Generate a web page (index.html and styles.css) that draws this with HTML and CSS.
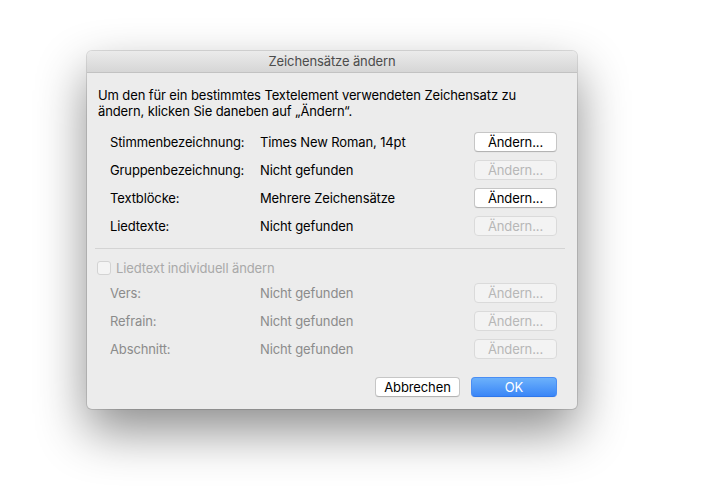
FILE: index.html
```html
<!DOCTYPE html>
<html lang="de">
  <head>
    <meta charset="UTF-8" />
    <title>Zeichensätze ändern</title>
    <link rel="stylesheet" href="styles.css">
  </head>
  <body>
    <div class="dialog">
      <div class="title-bar">Zeichensätze ändern</div>

      <div class="dialog-body">
        <p class="intro">
          Um den für ein bestimmtes Textelement verwendeten Zeichensatz zu<br />
          ändern, klicken Sie daneben auf „Ändern“.
        </p>

        <div class="font-rows">
          <div class="label">Stimmenbezeichnung:</div>
          <div class="value">Times New Roman, 14pt</div>
          <button class="btn">Ändern...</button>

          <div class="label">Gruppenbezeichnung:</div>
          <div class="value">Nicht gefunden</div>
          <button class="btn" disabled>Ändern...</button>

          <div class="label">Textblöcke:</div>
          <div class="value">Mehrere Zeichensätze</div>
          <button class="btn">Ändern...</button>

          <div class="label">Liedtexte:</div>
          <div class="value">Nicht gefunden</div>
          <button class="btn" disabled>Ändern...</button>
        </div>

        <div class="separator"></div>

        <label class="check disabled">
          <span class="check-box"></span>
          Liedtext individuell ändern
        </label>

        <div class="font-rows lyrics-rows disabled">
          <div class="label">Vers:</div>
          <div class="value">Nicht gefunden</div>
          <button class="btn" disabled>Ändern...</button>

          <div class="label">Refrain:</div>
          <div class="value">Nicht gefunden</div>
          <button class="btn" disabled>Ändern...</button>

          <div class="label">Abschnitt:</div>
          <div class="value">Nicht gefunden</div>
          <button class="btn" disabled>Ändern...</button>
        </div>

        <div class="footer">
          <button class="btn cancel-btn">Abbrechen</button>
          <button class="btn ok-btn">OK</button>
        </div>
      </div>
    </div>
  </body>
</html>
```

FILE: styles.css
```css
* {
  margin: 0;
  padding: 0;
  box-sizing: border-box;
}

html,
body {
  min-height: 100vh;
  background: #fff;
}

body {
  font-family: Inter, "Liberation Sans", Arial, sans-serif;
  font-size: 13px;
  letter-spacing: -0.12px;
  color: #000;
  padding: 51px 0 0 87px;
}

.dialog {
  width: 490px;
  background: #ececec;
  border-radius: 5px;
  overflow: hidden;
  box-shadow: 0 22px 50px rgba(0, 0, 0, 0.45), 0 0 0 1px rgba(0, 0, 0, 0.12);
}

.title-bar {
  height: 22px;
  line-height: 21px;
  text-align: center;
  color: #4c4c4c;
  background: linear-gradient(#ebebeb, #d6d6d6);
  border-bottom: 1px solid #c2c2c2;
}

.dialog-body {
  padding: 14px 12px 12px 11px;
}

.intro {
  line-height: 16px;
}

.font-rows {
  display: grid;
  grid-template-columns: 150px 1fr 83px;
  grid-auto-rows: 20px;
  row-gap: 8px;
  align-items: center;
  margin-top: 13px;
  padding: 0 8px 0 12px;
}

.btn {
  height: 20px;
  font-family: inherit;
  font-size: 13px;
  letter-spacing: inherit;
  color: #000;
  background: #fff;
  border: 1px solid #c6c6c6;
  border-bottom-color: #b3b3b3;
  border-radius: 4px;
  box-shadow: 0 0.5px 0 rgba(0, 0, 0, 0.05);
}

.btn:disabled {
  color: #b7b7b7;
  background: #f3f3f3;
  border-color: #dadada;
  box-shadow: none;
}

.separator {
  height: 1px;
  background: #d4d4d4;
  margin: 12px 0 0 -3px;
}

.check {
  display: flex;
  align-items: center;
  gap: 5px;
  height: 14px;
  margin: 12px 0 0 -1px;
}

.check-box {
  width: 14px;
  height: 14px;
  border: 1px solid #d3d3d3;
  border-radius: 3px;
  background: #f4f4f4;
}

.check.disabled {
  color: #a9a9a9;
}

.lyrics-rows {
  margin-top: 8px;
}

.lyrics-rows.disabled .label,
.lyrics-rows.disabled .value {
  color: #8b8b8b;
}

.footer {
  display: flex;
  justify-content: flex-end;
  gap: 11px;
  margin-top: 18px;
  padding-right: 8px;
}

.cancel-btn {
  width: 85px;
}

.ok-btn {
  width: 86px;
  color: #fff;
  background: linear-gradient(#6cb1fb, #3a86f7);
  border: 1px solid #4a8ef4;
  border-bottom-color: #2f77ea;
}
```
